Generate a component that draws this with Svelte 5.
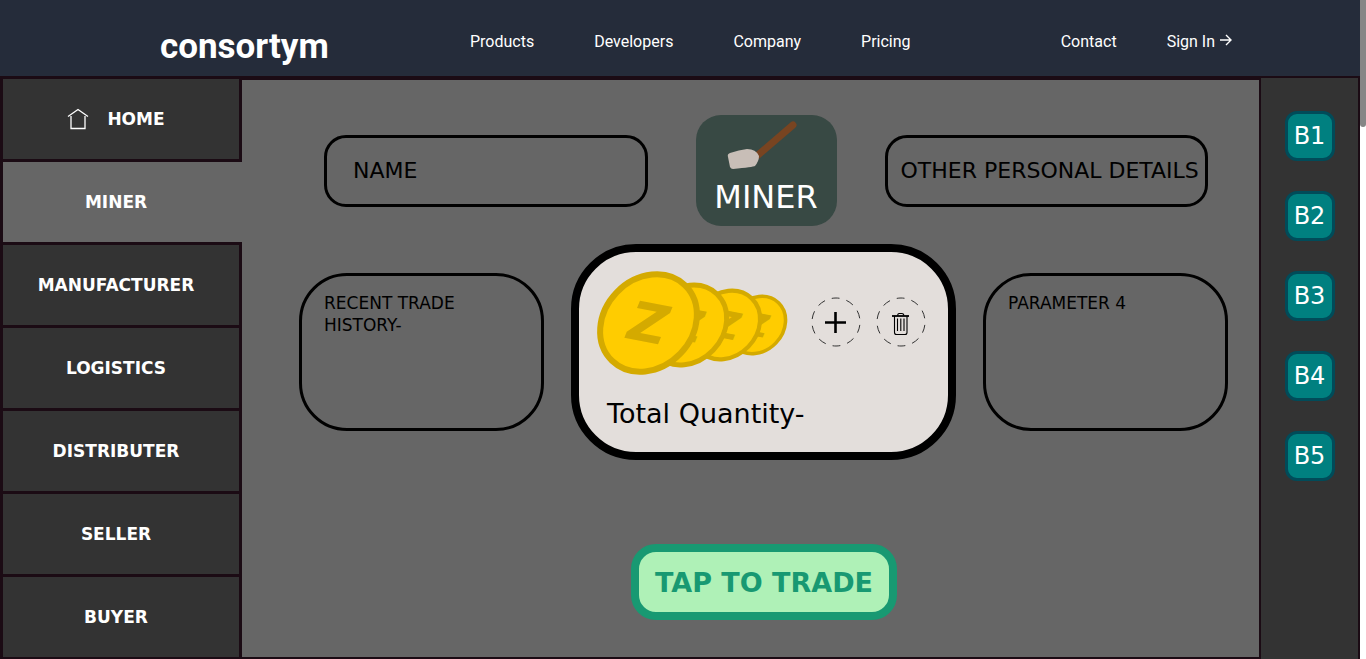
<script>
  const products = ['Products', 'Developers', 'Company', 'Pricing'];
  const roles = ['Miner', 'Manufacturer', 'Logistics', 'Distributer', 'Seller', 'Buyer'];
  const blocks = ['B1', 'B2', 'B3', 'B4', 'B5'];
  const coins = [
    { x: 160, y: 54, s: 0.59 },
    { x: 129, y: 54, s: 0.705 },
    { x: 90, y: 54, s: 0.82 },
    { x: 51.5, y: 52, s: 1 }
  ];
  let active = $state('Miner');
</script>

<div class="window">
  <div class="page">
    <header>
      <a class="brand" href="#top">consortym</a>
      <nav class="links" aria-label="Main">
        {#each products as item}<a href="#{item}">{item}</a>{/each}
      </nav>
      <div class="account">
        <a href="#contact">Contact</a>
        <a class="signin" href="#signin">Sign In
          <svg width="12" height="12" viewBox="0 0 12 12" aria-hidden="true"><path d="M0 6H11M6 1L11 6L6 11" /></svg>
        </a>
      </div>
    </header>

    <div class="body">
      <nav class="side" aria-label="Roles">
        <a class="role" href="#home">
          <svg width="22" height="22" viewBox="0 0 22 22" aria-hidden="true"><path d="M1 8.5L11 1.5L21 8.5M4 8V20.5H18V8" /></svg>
          HOME
        </a>
        {#each roles as role}
          <a class="role" class:active={active === role} href="#{role}" onclick={() => (active = role)}>{role.toUpperCase()}</a>
        {/each}
      </nav>

      <main>
        <section class="profile">
          <div class="field name">NAME</div>
          <div class="badge">
            <svg width="141" height="60" viewBox="0 0 141 60" aria-hidden="true">
              <path d="M62 40L97 10" stroke="#784421" stroke-width="7" stroke-linecap="round" />
              <path d="M34 38Q43 35 51 34Q60 34 63 41Q63 46 59 51Q57 52 37 54Q35 54 34 52L32 42Q31 39 34 38Z" fill="#c8beb7" />
            </svg>
            <span>MINER</span>
          </div>
          <div class="field details">OTHER PERSONAL DETAILS</div>
        </section>

        <section class="stats">
          <div class="panel">RECENT TRADE HISTORY-</div>
          <div class="wallet">
            <div class="tools">
              <svg class="coins" width="191" height="101" viewBox="0 0 191 101" aria-hidden="true">
                {#each coins as c}
                  <g transform="translate({c.x} {c.y}) scale({c.s})">
                    <ellipse rx="52.5" ry="44.2" transform="rotate(-46)" />
                    <text text-anchor="middle" y="19" transform="rotate(11)">Z</text>
                  </g>
                {/each}
              </svg>
              <button class="round" aria-label="Add">
                <svg width="50" height="50" viewBox="0 0 50 50">
                  <circle cx="25" cy="25" r="24" />
                  <path d="M14 25.5H35M24.5 15V36" stroke="#000" stroke-width="2.6" />
                </svg>
              </button>
              <button class="round" aria-label="Delete">
                <svg width="50" height="50" viewBox="0 0 50 50">
                  <circle cx="25" cy="25" r="24" />
                  <path d="M16 19H33" stroke="#000" stroke-width="1.8" />
                  <path d="M21.500 18.500Q22 16.500 23 16.500H26Q27.500 16.500 28 18.500M18.500 19V35.500Q18.500 37.500 20.500 37.500H29Q31 37.500 31 35.500V19M21.500 21.500V34M24.800 21.500V34M28 21.500V34" stroke="#000" stroke-width="1.1" />
                </svg>
              </button>
            </div>
            <p>Total Quantity-</p>
          </div>
          <div class="panel">PARAMETER 4</div>
        </section>

        <button class="trade">TAP TO TRADE</button>
      </main>

      <aside>
        {#each blocks as block}<button class="block">{block}</button>{/each}
      </aside>
    </div>
  </div>
  <div class="track"><div class="thumb"></div></div>
</div>

<style>
  :global(body) { margin: 0; }
  * { box-sizing: border-box; }
  svg { display: block; fill: none; flex: none; }
  a { color: inherit; text-decoration: none; }
  button { font: inherit; cursor: pointer; padding: 0; }

  .window {
    display: flex;
    min-height: 100vh;
    font-family: Verdana, "DejaVu Sans", sans-serif;
  }
  .page { flex: 1; display: flex; flex-direction: column; }
  .track { width: 6px; background: #fff; }
  .thumb { height: 127px; background: #868686; border-radius: 0 0 3px 3px; }

  header {
    display: flex;
    align-items: center;
    height: 76px;
    padding: 8px 128px 0 160px;
    background: #252c3a;
    color: #fff;
    font: 16px/20px Roboto, sans-serif;
  }
  .brand { width: 310px; padding-top: 10px; font-size: 35px; line-height: 44px; font-weight: 700; }
  .links { display: flex; gap: 60px; }
  .account { display: flex; gap: 50px; margin-left: auto; }
  .signin { display: flex; gap: 5px; }
  .signin svg { margin-top: 2px; stroke: #fff; stroke-width: 1.4; }

  .body {
    flex: 1;
    display: grid;
    grid-template-columns: 242px 1fr 101px;
    background: #1b0b14;
  }
  .side {
    display: grid;
    grid-auto-rows: 1fr;
    gap: 3px;
    padding: 3px 3px 2px;
    color: #fff;
    font-size: 17px;
    font-weight: 700;
  }
  .role {
    display: flex;
    align-items: center;
    justify-content: center;
    gap: 18px;
    padding-right: 10px;
    background: #333;
  }
  .role.active { margin-right: -3px; padding-right: 13px; background: #666; }
  .role svg { stroke: #fff; stroke-width: 1.3; }

  main {
    display: flex;
    flex-direction: column;
    margin: 4px 0 2px;
    padding: 35px 0 37px;
    background: #666;
    color: #000;
  }
  .profile {
    display: grid;
    grid-template-columns: 1fr 141px 1fr;
    align-items: center;
    gap: 48px;
    padding: 0 51px 0 82px;
  }
  .field {
    display: flex;
    align-items: center;
    height: 72px;
    border: 3px solid #000;
    border-radius: 22px;
    font-size: 22px;
    white-space: nowrap;
  }
  .name { padding-left: 26px; }
  .details { padding-left: 13px; }
  .badge {
    height: 111px;
    border-radius: 25px;
    background: #384944;
    color: #fff;
    font-size: 32px;
    line-height: 44px;
    text-align: center;
  }
  .stats {
    display: grid;
    grid-template-columns: 245fr 385fr 245fr;
    align-items: center;
    gap: 27px;
    margin-top: 18px;
    padding: 0 31px 0 57px;
  }
  .panel {
    height: 158px;
    padding: 16px 22px;
    border: 3px solid #000;
    border-radius: 48px;
    font-size: 17px;
    line-height: 22px;
  }
  .wallet {
    height: 216px;
    padding: 19px 18px;
    border: 8px solid #000;
    border-radius: 65px;
    background: #e3dedb;
  }
  .tools { display: flex; align-items: center; gap: 15px; }
  .coins { margin-right: 8px; overflow: visible; }
  .coins ellipse { fill: #fc0; stroke: #d4aa00; stroke-width: 6; }
  .coins text { fill: #d4aa00; font: italic 700 54px "DejaVu Sans", sans-serif; }
  .round { border: 0; background: none; border-radius: 50%; }
  .round circle { stroke: #333; stroke-dasharray: 8 7; stroke-dashoffset: 12; }
  p { margin: 24px 10px 0; font-size: 27px; line-height: 36px; }

  .trade {
    align-self: center;
    width: 266px;
    height: 76px;
    margin: auto 0 0 27px;
    border: 8px solid #189972;
    border-radius: 25px;
    background: #aff1b7;
    color: #189972;
    font-size: 27px;
    font-weight: 700;
    white-space: nowrap;
  }

  aside {
    display: flex;
    flex-direction: column;
    align-items: center;
    gap: 30px;
    margin: 2px 2px 0;
    padding-top: 33px;
    background: #333;
  }
  .block {
    width: 50px;
    height: 50px;
    border: 3px solid #014b59;
    border-radius: 12px;
    background: #008080;
    color: #fff;
    font-size: 24px;
  }
</style>
